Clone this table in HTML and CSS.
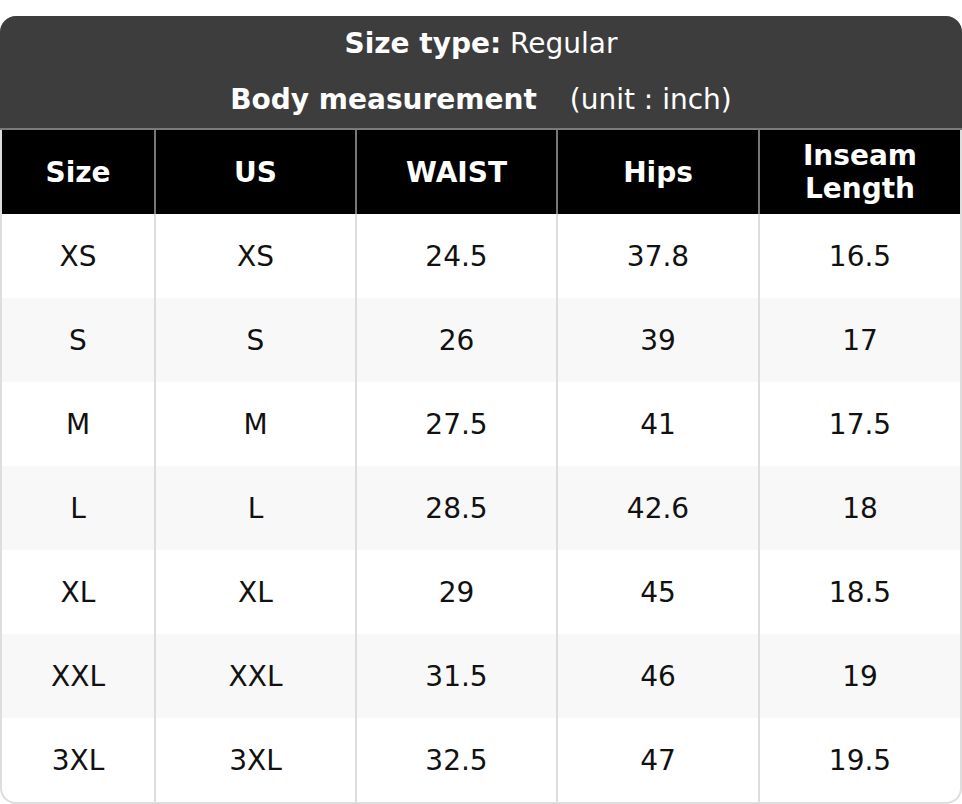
FILE: index.html
```html
<!DOCTYPE html>
<html>
<head>
<meta charset="utf-8">
<link rel="stylesheet" href="styles.css">
</head>
<body>
<div class="chart">
  <div class="title">
    <div class="title-line"><b>Size type:</b> Regular</div>
    <div class="title-line"><b>Body measurement</b><span class="unit">(unit : inch)</span></div>
  </div>
  <div class="table-wrap">
    <table class="sizes">
      <colgroup>
        <col class="c-first"><col class="c"><col class="c"><col class="c-wide"><col class="c">
      </colgroup>
      <thead>
        <tr><th>Size</th><th>US</th><th>WAIST</th><th>Hips</th><th>Inseam<br>Length</th></tr>
      </thead>
      <tbody>
        <tr><td>XS</td><td>XS</td><td>24.5</td><td>37.8</td><td>16.5</td></tr>
        <tr><td>S</td><td>S</td><td>26</td><td>39</td><td>17</td></tr>
        <tr><td>M</td><td>M</td><td>27.5</td><td>41</td><td>17.5</td></tr>
        <tr><td>L</td><td>L</td><td>28.5</td><td>42.6</td><td>18</td></tr>
        <tr><td>XL</td><td>XL</td><td>29</td><td>45</td><td>18.5</td></tr>
        <tr><td>XXL</td><td>XXL</td><td>31.5</td><td>46</td><td>19</td></tr>
        <tr><td>3XL</td><td>3XL</td><td>32.5</td><td>47</td><td>19.5</td></tr>
      </tbody>
    </table>
  </div>
</div>
</body>
</html>
```

FILE: styles.css
```css
html, body {
  margin: 0;
  padding: 0;
  background: #fff;
}
body {
  padding-top: 16px;
  font-family: "DejaVu Sans", sans-serif;
  font-size: 28px;
  color: #111;
}
.chart {
  width: 962px;
  box-sizing: border-box;
  background: #dddddd;
  border-radius: 16px;
  padding: 0 2px 2px;
  overflow: hidden;
}
.title {
  margin: 0 -2px;
  background: #3d3d3d;
  color: #fff;
  text-align: center;
  border-bottom: 2px solid #7a7a7a;
}
.title-line {
  height: 56px;
  line-height: 56px;
}
.title b {
  font-weight: bold;
}
.unit {
  margin-left: 33px;
}
.table-wrap {
  background: #fff;
  border-radius: 0 0 14px 14px;
  overflow: hidden;
}
.sizes {
  width: 958px;
  border-collapse: collapse;
  table-layout: fixed;
}
.c-first {
  width: 153px;
}
.c {
  width: 201px;
}
.c-wide {
  width: 202px;
}
.sizes th {
  background: #000;
  color: #fff;
  font-weight: bold;
  height: 84px;
  padding: 0;
  line-height: 33px;
  text-align: center;
  border-right: 2px solid #777;
}
.sizes td {
  height: 84px;
  padding: 0;
  text-align: center;
  border-right: 2px solid #dddddd;
}
.sizes th:last-child,
.sizes td:last-child {
  border-right: none;
}
.sizes tbody tr:nth-child(even) td {
  background: #f8f8f8;
}
```
